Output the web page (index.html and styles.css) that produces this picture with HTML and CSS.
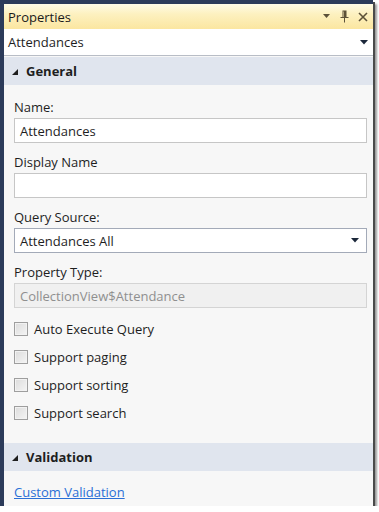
FILE: index.html
```html
<!DOCTYPE html>
<html lang="en">
<head>
    <meta charset="UTF-8">
    <meta name="viewport" content="width=device-width, initial-scale=1.0">
    <title>Properties</title>
    <link rel="stylesheet" href="styles.css">
</head>
<body>

<div class="window">
    <div class="title-bar">
        <span class="title">Properties</span>
        <span class="title-tools">
            <svg width="8" height="5" viewBox="0 0 8 5"><path d="M0 0 H7 L3.5 4 Z" fill="#5c5138"/></svg>
            <svg width="9" height="13" viewBox="0 0 9 13"><path d="M2.5 0.5 H6.5 V7 H8.5 V8 H5 V12.5 H4 V8 H0.5 V7 H2.5 Z M3.5 1.5 V7 H4 V1.5 Z" fill="#5c5138"/></svg>
            <svg width="10" height="10" viewBox="0 0 10 10"><path d="M1 1 L9 9 M9 1 L1 9" stroke="#5c5138" stroke-width="1.6"/></svg>
        </span>
    </div>

    <div class="object-select">
        <span>Attendances</span>
        <svg width="8" height="5" viewBox="0 0 8 5"><path d="M0 0 H8 L4 4.5 Z" fill="#1b273a"/></svg>
    </div>

    <div class="section-header">
        <svg class="expander" width="6" height="6" viewBox="0 0 6 6"><path d="M6 0 V6 H0 Z" fill="#1e1e1e"/></svg>
        <span>General</span>
    </div>

    <div class="section-body">
        <div class="field">
            <label for="name">Name:</label>
            <div class="text-box" id="name">Attendances</div>
        </div>
        <div class="field">
            <label for="display-name">Display Name</label>
            <div class="text-box" id="display-name"></div>
        </div>
        <div class="field">
            <label for="query-source">Query Source:</label>
            <div class="text-box combo" id="query-source">
                <span>Attendances All</span>
                <svg width="8" height="5" viewBox="0 0 8 5"><path d="M0 0 H8 L4 4.5 Z" fill="#1b273a"/></svg>
            </div>
        </div>
        <div class="field last">
            <label for="property-type">Property Type:</label>
            <div class="text-box disabled" id="property-type">CollectionView$Attendance</div>
        </div>

        <ul class="checks">
            <li><span class="check-box"></span>Auto Execute Query</li>
            <li><span class="check-box"></span>Support paging</li>
            <li><span class="check-box"></span>Support sorting</li>
            <li><span class="check-box"></span>Support search</li>
        </ul>
    </div>

    <div class="section-header">
        <svg class="expander" width="6" height="6" viewBox="0 0 6 6"><path d="M6 0 V6 H0 Z" fill="#1e1e1e"/></svg>
        <span>Validation</span>
    </div>

    <div class="section-body link-body">
        <a href="#" class="link">Custom Validation</a>
    </div>
</div>

</body>
</html>
```

FILE: styles.css
```css
body {
    margin: 0;
    background: #ffffff;
    font-family: 'Open Sans', 'Noto Sans', sans-serif;
    font-size: 13px;
    color: #1e1e1e;
}
.window {
    width: 369px;
    height: 502px;
    border-left: 4px solid #2c3b5a;
    border-top: 4px solid #2c3b5a;
    background: #f7f7f7;
    box-shadow: 2px 2px 0 #4a4a4a, 4px 4px 2px #9a9a9a;
    display: flex;
    flex-direction: column;
    overflow: hidden;
}
.title-bar {
    height: 25px;
    background: linear-gradient(#fffbe6 0%, #fdf1c0 40%, #fbe6a0 100%);
    display: flex;
    align-items: center;
    justify-content: space-between;
    padding: 0 4px 0 4px;
}
.title {
    font-size: 13px;
    color: #1a1a1a;
}
.title-tools {
    display: flex;
    align-items: center;
    gap: 9px;
    padding-right: 1px;
}
.object-select {
    height: 26px;
    background: #ffffff;
    border-bottom: 1px solid #b8bdc6;
    display: flex;
    align-items: center;
    justify-content: space-between;
    padding: 0 5px 0 4px;
}
.section-header {
    height: 28px;
    background: #e0e5ee;
    display: flex;
    align-items: center;
    gap: 8px;
    padding-left: 8px;
    font-weight: 700;
    font-size: 13px;
    margin-top: 1px;
}
.expander {
    margin-top: 1px;
}
.section-body {
    padding: 14px 6px 0 10px;
}
.field {
    margin-bottom: 11px;
}
.field.last {
    margin-bottom: 7px;
}
label {
    display: block;
    line-height: 16px;
    margin-bottom: 3px;
    color: #1e1e1e;
}
.text-box {
    height: 23px;
    border: 1px solid #c6c6c6;
    background: #ffffff;
    display: flex;
    align-items: center;
    padding: 0 5px;
    line-height: 16px;
}
.combo {
    border-color: #a3aab8;
    justify-content: space-between;
    padding-right: 7px;
}
.disabled {
    background: #f0f0f0;
    border-color: #d4d4d4;
    color: #8f8f8f;
}
.checks {
    list-style: none;
    margin: 0 0 15px 0;
    padding: 0;
}
.checks li {
    height: 28px;
    display: flex;
    align-items: center;
    gap: 6px;
}
.check-box {
    width: 12px;
    height: 12px;
    border: 1px solid #9e9e9e;
    background: linear-gradient(135deg, #dcdcdc, #f4f4f4);
    box-shadow: inset 0 0 0 1px #f2f2f2;
}
.link-body {
    padding-top: 12px;
}
.link {
    color: #2a6fd6;
    text-decoration: underline;
    line-height: 16px;
}
```
